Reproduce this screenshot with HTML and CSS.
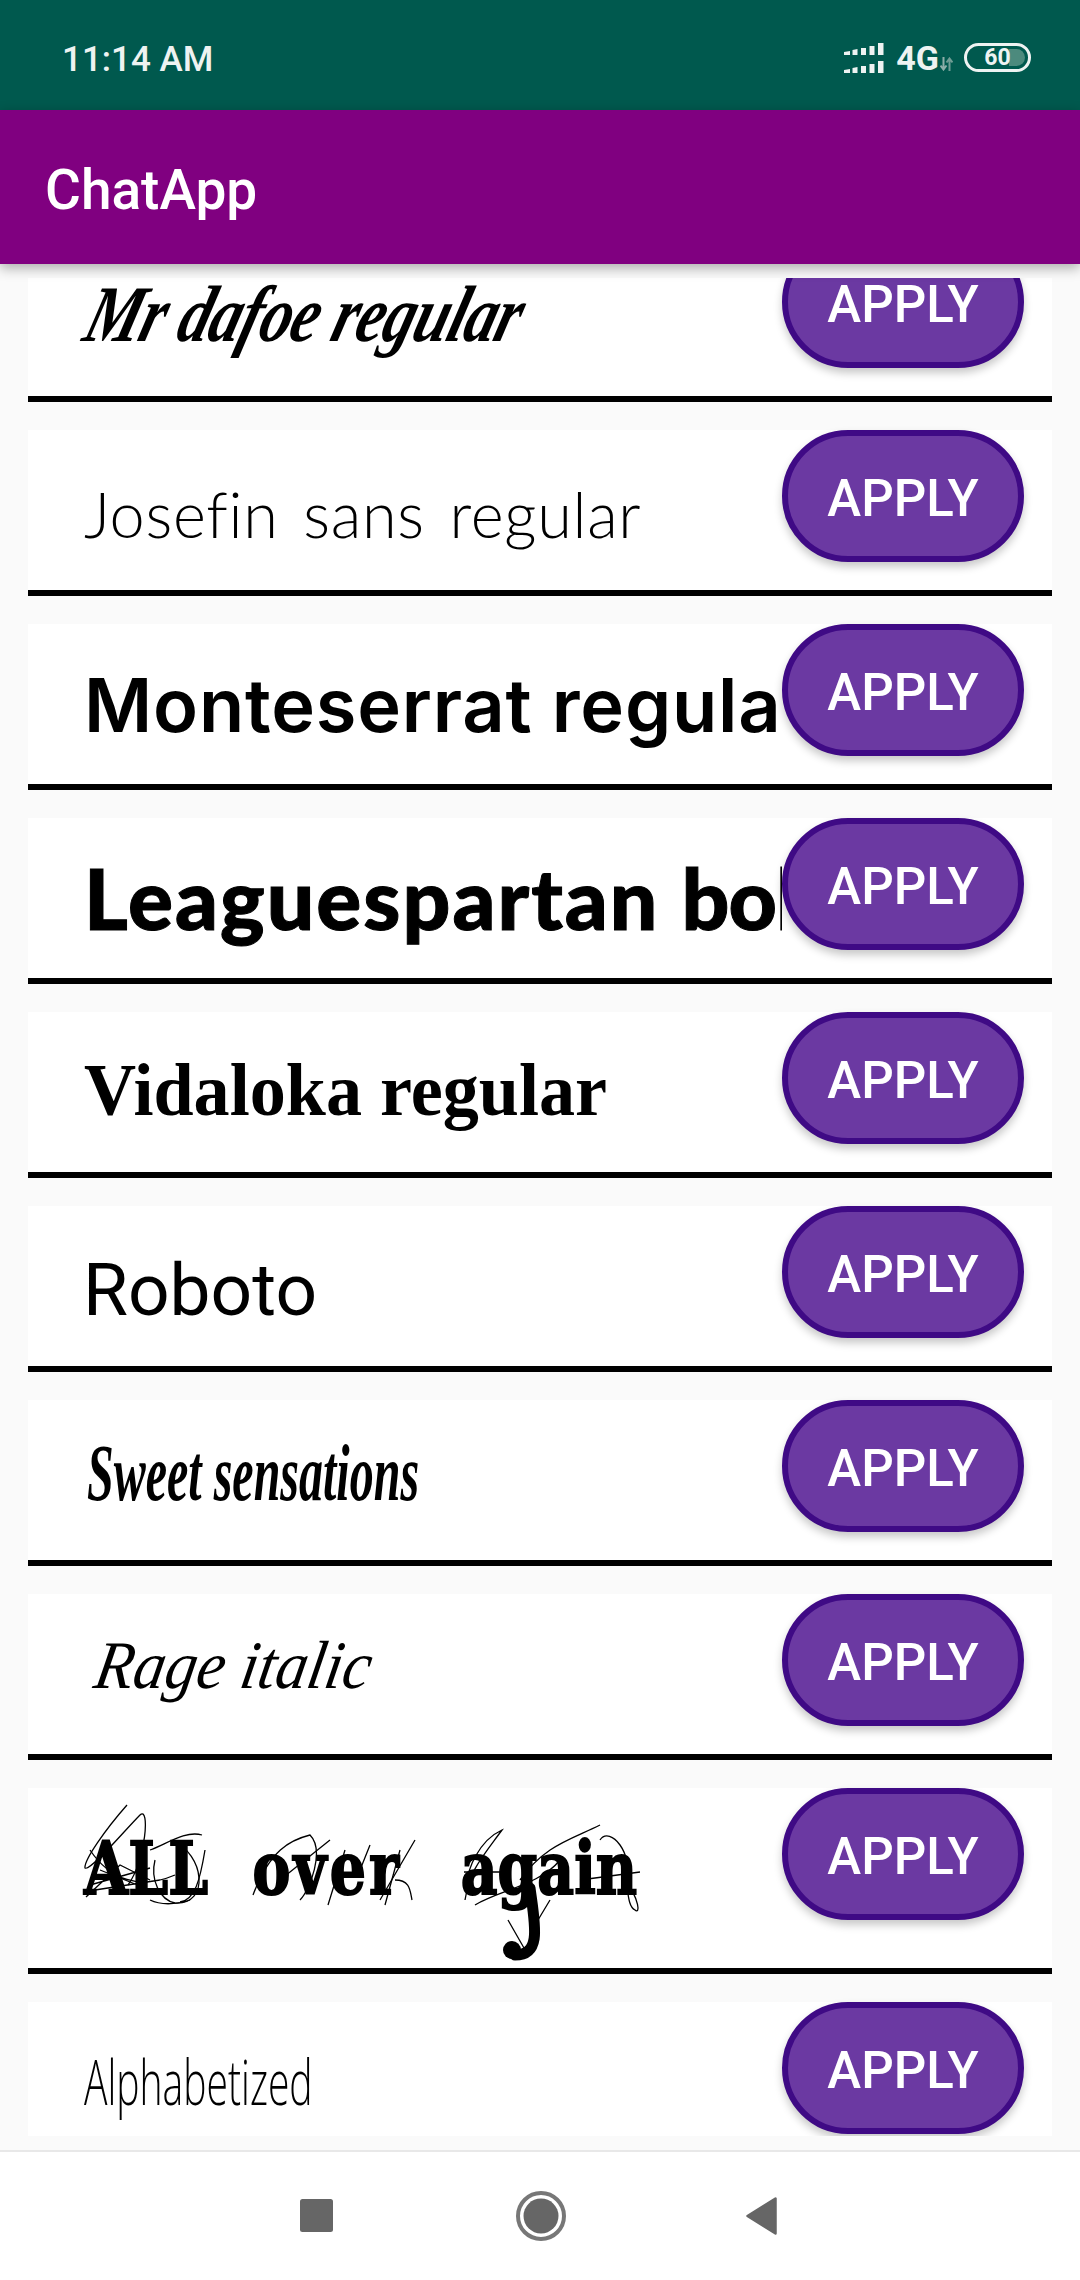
FILE: index.html
```html
<!DOCTYPE html>
<html lang="en">
<head>
<meta charset="utf-8">
<title>ChatApp</title>
<link rel="stylesheet" href="styles.css">
</head>
<body>
<div class="status">
  <span class="clock">11:14 AM</span>
  <div class="indicators">
    <svg class="signal" width="40" height="30" viewBox="0 0 40 30" fill="#eef3f2">
      <path d="M0 9l6-1v4H0zM8.500 7l5-1v6h-5zM17 5h5v7h-5zM25.500 3h5v9h-5zM34 0h5.500v12H34z"/>
      <path d="M0 27l6-1v4H0zM8.500 25l5-1v6h-5zM17 23h5v7h-5zM25.500 21h5v9h-5zM34 18h5.500v12H34z"/>
    </svg>
    <span class="network">4G</span>
    <svg class="arrows" width="13" height="14" viewBox="0 0 13 14" fill="none" stroke-width="2">
      <path d="M3.500 0v12M0.500 8.500l3 4 3-4" stroke="#9db9b3"/>
      <path d="M9.500 14V2M6.500 5.500l3-4 3 4" stroke="#7da69d"/>
    </svg>
    <div class="battery"><span class="battery-fill"></span><span class="battery-level">60</span></div>
  </div>
</div>
<header class="appbar">ChatApp</header>
<main class="viewport">
  <div class="row row-first"><div class="name"><span class="face dafoe">Mr dafoe regular</span></div><button class="apply">APPLY</button></div>
  <div class="row"><div class="name"><span class="face josefin">Josefin sans regular</span></div><button class="apply">APPLY</button></div>
  <div class="row"><div class="name"><span class="face mont">Monteserrat regular</span></div><button class="apply">APPLY</button></div>
  <div class="row"><div class="name"><span class="face league">Leaguespartan <span class="tight">bold</span></span></div><button class="apply">APPLY</button></div>
  <div class="row"><div class="name"><span class="face vidaloka">Vidaloka regular</span></div><button class="apply">APPLY</button></div>
  <div class="row"><div class="name"><span class="face roboto">Roboto</span></div><button class="apply">APPLY</button></div>
  <div class="row"><div class="name"><span class="face sweet">Sweet sensations</span></div><button class="apply">APPLY</button></div>
  <div class="row"><div class="name"><span class="face rage">Rage italic</span></div><button class="apply">APPLY</button></div>
  <div class="row row-tall">
    <div class="name"><span class="face allover">ALL <span class="wide">over</span> again</span></div>
    <svg class="scribble" width="600" height="180" viewBox="84 1788 600 180" fill="none" stroke="#000" stroke-width="1.300">
      <path d="M127 1805C105 1830 84 1860 85 1868C90 1872 125 1830 140 1815C150 1805 146 1860 128 1885"/>
      <path d="M90 1850C110 1880 140 1890 175 1875M86 1897L120 1865L150 1880M100 1870L145 1888M90 1885L150 1868M95 1890L160 1880"/>
      <path d="M150 1850C165 1845 185 1830 202 1835M172 1840C205 1855 210 1905 175 1903C160 1900 150 1880 155 1860"/>
      <path d="M205 1850C200 1880 195 1900 180 1902M150 1900C160 1905 175 1905 190 1900"/>
      <path d="M253 1895C270 1850 290 1840 310 1835C325 1850 310 1890 300 1900M345 1850L328 1905M415 1840L380 1900M395 1880C410 1880 410 1890 412 1900"/>
      <path d="M280 1880L330 1840M360 1870L370 1845M385 1905L400 1850"/>
      <path d="M465 1900C470 1870 480 1860 502 1830C480 1840 465 1870 468 1888M520 1880C545 1845 570 1840 600 1825"/>
      <path d="M600 1840C610 1825 635 1855 625 1880C640 1900 640 1915 635 1910C625 1905 630 1880 620 1860"/>
      <path d="M508 1920L528 1955M550 1900L535 1925"/>
      <path d="M464 1872H500M580 1880L640 1872M475 1905C500 1890 540 1885 560 1860"/>
      <path d="M530 1888C535 1925 542 1955 515 1955" stroke-width="11" stroke-linecap="round"/>
      <circle cx="512" cy="1950" r="9" fill="#000" stroke="none"/>
    </svg>
    <button class="apply">APPLY</button>
  </div>
  <div class="row"><div class="name"><span class="face alpha">Alphabetized</span></div><button class="apply">APPLY</button></div>
</main>
<nav class="navbar">
  <svg class="nav-square" width="33" height="33" viewBox="0 0 33 33"><rect width="33" height="33" rx="2.500" fill="#666"/></svg>
  <svg class="nav-circle" width="50" height="50" viewBox="0 0 50 50"><circle cx="25" cy="25" r="23" fill="none" stroke="#777" stroke-width="4"/><circle cx="25" cy="25" r="17.500" fill="#666"/></svg>
  <svg class="nav-back" width="31" height="38" viewBox="0 0 31 38"><path d="M29.500 1.500V36.500L1.500 19z" fill="#666" stroke="#666" stroke-width="2.500" stroke-linejoin="round"/></svg>
</nav>
</body>
</html>
```
FILE: styles.css
```css
* { box-sizing: border-box; }
html, body { margin: 0; padding: 0; }
body {
  width: 1080px;
  height: 2280px;
  overflow: hidden;
  background: #fafafa;
  font-family: Roboto, "Liberation Sans", sans-serif;
  display: flex;
  flex-direction: column;
}
.status {
  height: 110px;
  flex: none;
  background: #00594e;
  color: #eef3f2;
  display: flex;
  align-items: center;
  justify-content: space-between;
  padding: 0 49px 0 62px;
}
.clock { font-size: 35px; font-weight: 500; padding-top: 9px; }
.indicators { display: flex; align-items: center; padding-top: 5px; }
.signal { display: block; }
.network { font-size: 34px; font-weight: 700; margin-left: 12px; }
.arrows { margin: 13px 0 0 1px; opacity: .9; }
.battery {
  position: relative;
  width: 67px;
  height: 29px;
  margin-left: 11px;
  border: 3.500px solid #eef3f2;
  border-radius: 15px;
  display: flex;
  align-items: center;
  justify-content: center;
}
.battery-fill {
  position: absolute;
  top: 3px; bottom: 3px; right: 3px;
  width: 16px;
  background: #4c8a7d;
  border-radius: 0 9px 9px 0;
}
.battery-level { position: relative; font-size: 23px; font-weight: 700; line-height: 1; }
.appbar {
  position: relative;
  z-index: 2;
  flex: none;
  height: 154px;
  background: #800080;
  color: #fff;
  font-size: 55px;
  font-weight: 500;
  padding-left: 45px;
  line-height: 160px;
  box-shadow: 0 4px 12px rgba(0,0,0,.32);
}
.viewport {
  flex: none;
  height: 1858px;
  margin: 14px 0;
  overflow: hidden;
}
.row {
  position: relative;
  height: 166px;
  margin: 0 28px 28px;
  background: #fff;
  border-bottom: 6px solid #000;
  display: flex;
  align-items: flex-start;
  padding-right: 28px;
}
.row-first { margin-top: -42px; }
.row-tall { height: 186px; }
.name {
  flex: 1;
  min-width: 0;
  height: 160px;
  overflow: hidden;
  white-space: nowrap;
  padding-left: 56px;
  color: #000;
}
.row-tall .name { height: 180px; }
.face { display: inline-block; line-height: 1; transform-origin: 0 50%; }
.apply {
  flex: none;
  width: 242px;
  height: 132px;
  padding: 5px 0 0;
  background: #6b39a2;
  border: 6px solid #3f0a85;
  border-radius: 66px;
  color: #fff;
  font: 500 51px Roboto, sans-serif;
  box-shadow: 0 5px 9px rgba(0,0,0,.22);
}
.dafoe {
  font: italic 700 80px "Liberation Serif", serif;
  margin-top: 33px;
  margin-left: 4px;
  letter-spacing: -1px;
  transform: skewX(-16deg) scaleX(.785);
}
.josefin {
  font: 300 63px Lato, sans-serif;
  letter-spacing: .7px;
  word-spacing: 7px;
  margin-top: 46px;
}
.mont {
  font: 600 74px Inter, sans-serif;
  letter-spacing: .8px;
  margin-top: 36px;
}
.league {
  font: 900 84px Lato, sans-serif;
  letter-spacing: 2px;
  margin-top: 29px;
  -webkit-text-stroke: 1px #000;
}
.tight { letter-spacing: -1px; }
.vidaloka {
  font: 700 74px "Liberation Serif", serif;
  margin-top: 36px;
  transform: scaleX(.975);
}
.roboto {
  font: 400 73px Roboto, sans-serif;
  margin-top: 41px;
  margin-left: -1px;
}
.sweet {
  font: italic 700 80px "Liberation Serif", serif;
  margin-top: 28px;
  margin-left: 3px;
  transform: scaleX(.6);
}
.rage {
  font: italic 400 68px "Liberation Serif", serif;
  margin-top: 32px;
  margin-left: 12px;
  transform: skewX(-10deg) scaleX(.93);
}
.allover {
  font: 700 72px "DejaVu Serif", serif;
  word-spacing: 31px;
  margin-top: 38px;
  transform: scaleX(.79);
  -webkit-text-stroke: 2px #000;
}
.wide { letter-spacing: 4px; margin-right: 18px; }
.alpha {
  font: 300 62px "Open Sans", sans-serif;
  margin-top: 37px;
  transform: scaleX(.63);
}
.scribble { position: absolute; left: 56px; top: 0; pointer-events: none; }
.navbar {
  flex: 1;
  background: #fff;
  border-top: 2px solid #e8e8e8;
  display: flex;
  align-items: flex-start;
  padding: 47px 0 0 300px;
}
.nav-square { margin-top: 0; }
.nav-circle { margin: -8px 0 0 183px; }
.nav-back { margin: -2px 0 0 180px; }
```
